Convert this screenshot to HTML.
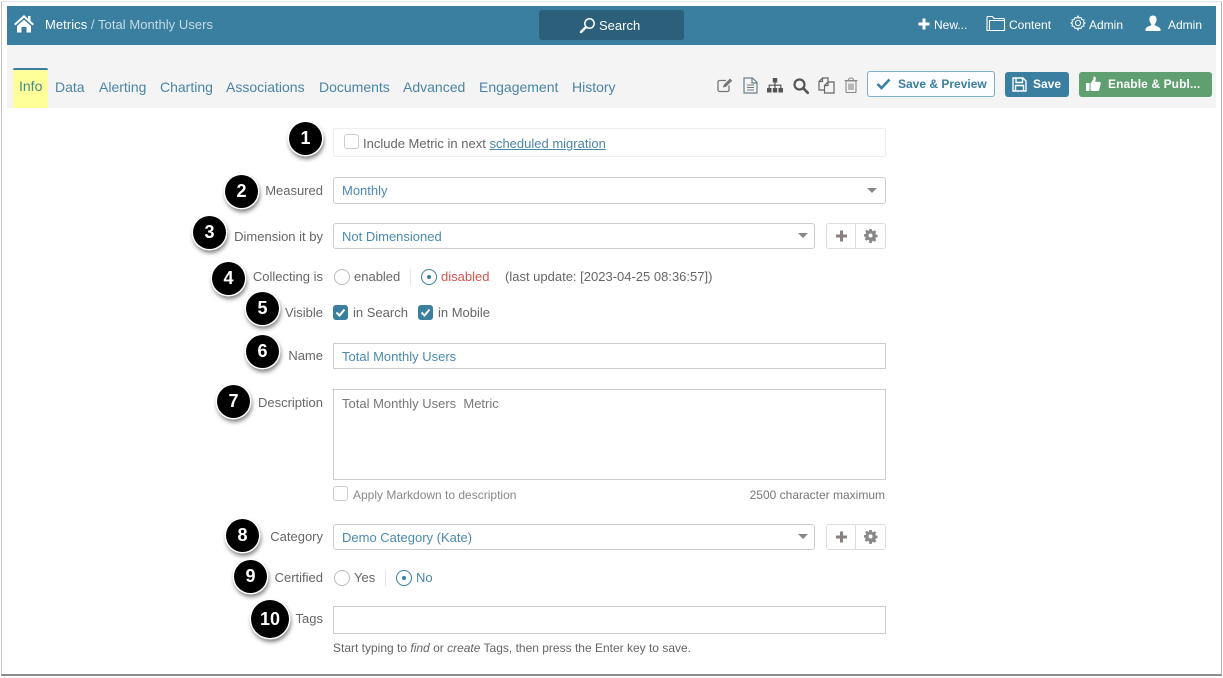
<!DOCTYPE html>
<html><head><meta charset="utf-8">
<style>
html,body{margin:0;padding:0;background:#fff}
body{width:1223px;height:678px;position:relative;overflow:hidden;font-family:"Liberation Sans",sans-serif;font-size:13px;color:#666}
.a{position:absolute;white-space:nowrap}
.t{position:absolute;white-space:nowrap;line-height:16px}
.l{position:absolute;white-space:nowrap;line-height:16px;right:900px;color:#666}
.tab{position:absolute;top:78px;line-height:18px;font-size:14px;color:#4b84a6;white-space:nowrap}
.box{position:absolute;box-sizing:border-box;background:#fff;border:1px solid #ccc;border-radius:3px}
.v{color:#4a8ab0}
.c{position:absolute;width:33px;height:33px;border-radius:50%;background:#000;box-shadow:0 0 0 1.5px #fff,1px 3px 4px 1px rgba(0,0,0,.5);color:#fff;font-size:18px;font-weight:bold;text-align:center;line-height:33px}
.arrow{position:absolute;width:0;height:0;border-left:5px solid transparent;border-right:5px solid transparent;border-top:5px solid #888}
.radio{position:absolute;box-sizing:border-box;width:16px;height:16px;border-radius:50%;border:1px solid #bbb;background:#fff}
.radio.on{border:1.5px solid #3a7fa0}
.radio.on:after{content:"";position:absolute;left:4.5px;top:4.5px;width:4px;height:4px;border-radius:50%;background:#3a7fa0}
.chk{position:absolute;width:15px;height:15px;border-radius:3px;background:#3a7fa0}
.un{position:absolute;box-sizing:border-box;width:15px;height:15px;border-radius:3px;border:1px solid #ccc;background:#fff}
svg{position:absolute;overflow:visible}
</style></head><body>
<div class="a" style="left:1px;top:1px;width:1221px;height:675px;box-sizing:border-box;border:1px solid #d4d4d4;border-bottom:2px solid #8c8c8c;border-right-color:#b5b5b5;border-left-color:#c4c4c4;border-top-color:#e6e6e6"></div>

<div class="a" style="left:7px;top:6px;width:1209px;height:39px;background:#3a7fa0"></div>
<div class="a" style="left:7px;top:45px;width:1209px;height:63px;background:#f4f4f4"></div>

<svg style="left:13px;top:14px" width="22" height="19" viewBox="0 0 22 19"><path d="M11 1 L1 10 L2.4 11.4 L11 3.8 L19.6 11.4 L21 10 L17.500 6.900 V2 H15 V4.700Z M4 12 L11 5.800 L18 12 V18.500 H13.500 V13 H8.500 V18.500 H4Z" fill="#fff"/></svg>
<div class="t" style="left:45px;top:17px;color:#fff;font-size:13px;letter-spacing:.05px">Metrics <span style="color:#c6dbe6">/ Total Monthly Users</span></div>

<div class="a" style="left:539px;top:10px;width:145px;height:30px;background:#2b5f7a;border-radius:3px"></div>
<svg style="left:579px;top:17px" width="17" height="17" viewBox="0 0 17 17"><circle cx="10.500" cy="6.500" r="4.700" fill="none" stroke="#fff" stroke-width="1.500"/><path d="M7 10 L2 15" stroke="#fff" stroke-width="2.400" stroke-linecap="round"/></svg>
<div class="t" style="left:599px;top:18px;color:#fff;font-size:13px">Search</div>

<svg style="left:918px;top:18px" width="12" height="12" viewBox="0 0 12 12"><path d="M4.500 0.500h3v4h4v3h-4v4h-3v-4h-4v-3h4z" fill="#fff"/></svg>
<div class="t" style="left:934px;top:17px;color:#fff;font-size:12px">New...</div>
<svg style="left:986px;top:15px" width="19" height="17" viewBox="0 0 19 17"><path d="M1 15.500V2.500a1 1 0 0 1 1-1h4.500l1.500 2h9.500a1 1 0 0 1 1 1v11zM3.500 15.500V5.500H18.500" fill="none" stroke="#fff" stroke-width="1.100"/></svg>
<div class="t" style="left:1009px;top:17px;color:#fff;font-size:12px">Content</div>
<svg style="left:1070px;top:15px" width="16" height="16" viewBox="0 0 16 16"><path d="M8 1l1 2 2-.5.800 2 2.200.500-.5 2L15 8l-1.500 1 .5 2-2.200.500-.8 2-2-.5-1 2-1-2-2 .5-.8-2L2 11l.5-2L1 8l1.500-1L2 5l2.200-.5.800-2 2 .5z" fill="none" stroke="#fff" stroke-width="1"/><circle cx="8" cy="8" r="2.600" fill="none" stroke="#fff" stroke-width="1"/></svg>
<div class="t" style="left:1089px;top:17px;color:#fff;font-size:12px">Admin</div>
<svg style="left:1145px;top:15px" width="16" height="17" viewBox="0 0 16 17"><path d="M8 .500c2.500 0 3.600 1.800 3.600 4 0 2-.9 3.600-1.800 4.500v1.400c2 .8 5.200 1.600 5.700 3.800V16H.500v-1.800c.5-2.200 3.700-3 5.700-3.800V9C5.300 8.100 4.400 6.500 4.400 4.500c0-2.200 1.100-4 3.600-4z" fill="#fff"/></svg>
<div class="t" style="left:1168px;top:17px;color:#fff;font-size:12px">Admin</div>

<div class="a" style="left:13px;top:68px;width:35px;height:40px;background:#ffff99;border-radius:2px 2px 0 0;box-sizing:border-box;border-top:2px solid #3a7fa0"></div>
<div class="tab" style="left:19px;top:77px;color:#4a8a8a">Info</div>
<div class="tab" style="left:55px">Data</div>
<div class="tab" style="left:99px">Alerting</div>
<div class="tab" style="left:160px">Charting</div>
<div class="tab" style="left:226px">Associations</div>
<div class="tab" style="left:319px">Documents</div>
<div class="tab" style="left:403px">Advanced</div>
<div class="tab" style="left:479px">Engagement</div>
<div class="tab" style="left:572px">History</div>

<svg style="left:717px;top:77px" width="17" height="16" viewBox="0 0 17 16"><path d="M12 8.500V13a1.500 1.500 0 0 1-1.500 1.500h-8A1.500 1.500 0 0 1 1 13V5a1.500 1.500 0 0 1 1.500-1.500H9" fill="none" stroke="#777" stroke-width="1.300"/><path d="M6 10.500l.7-2.800 6.300-6.200 2.200 2.200-6.300 6.200z" fill="#777"/></svg>
<svg style="left:743px;top:77px" width="15" height="17" viewBox="0 0 15 17"><path d="M1 1h8.500L14 5.500V16H1zM9 1v5h5" fill="none" stroke="#6a7f8f" stroke-width="1.200"/><path d="M4 8h7M4 10.500h7M4 13h7" stroke="#777" stroke-width="1.100"/></svg>
<svg style="left:767px;top:78px" width="16" height="15" viewBox="0 0 16 15"><path d="M5.800 0h4.400v4.500H5.800zM0 10h4.500v4.500H0zM5.800 10h4.400v4.500H5.800zM11.500 10H16v4.500h-4.500z" fill="#555"/><path d="M8 4.500V10M2.200 10V7.200h11.600V10" fill="none" stroke="#555" stroke-width="1.200"/></svg>
<svg style="left:793px;top:78px" width="16" height="16" viewBox="0 0 16 16"><circle cx="6.500" cy="6.500" r="5" fill="none" stroke="#555" stroke-width="2.200"/><path d="M10.200 10.200L14.800 14.800" stroke="#555" stroke-width="2.600" stroke-linecap="round"/></svg>
<svg style="left:818px;top:77px" width="17" height="17" viewBox="0 0 17 17"><path d="M6.500 13H1V4.500L4.500 1H10V5M4.500 1V4.500H1M6.500 16V8.500L10 5H16V16zM10 5V8.500H6.500" fill="none" stroke="#666" stroke-width="1.200"/></svg>
<svg style="left:844px;top:77px" width="14" height="16" viewBox="0 0 14 16"><path d="M2 4h10v10.500a1 1 0 0 1-1 1H3a1 1 0 0 1-1-1zM.5 3.500h13M4.500 3.500C4.500 1.800 5 1 7 1s2.500.8 2.500 2.500M5 6.500v6.500M7 6.500v6.500M9 6.500v6.500" fill="none" stroke="#888" stroke-width="1.100"/></svg>

<div class="a" style="left:867px;top:71px;width:128px;height:26px;box-sizing:border-box;border:1px solid #7fb0c8;border-radius:3px;background:#fbfdfe"></div>
<svg style="left:876px;top:78px" width="15" height="12" viewBox="0 0 15 12"><path d="M1.500 6l4 4 8-8.500" fill="none" stroke="#3a7fa0" stroke-width="2.600"/></svg>
<div class="t" style="left:898px;top:76px;color:#3a7fa0;font-size:12px;font-weight:bold;letter-spacing:0">Save &amp; Preview</div>
<div class="a" style="left:1005px;top:72px;width:64px;height:25px;background:#3a7fa0;border-radius:3px"></div>
<svg style="left:1012px;top:77px" width="15" height="15" viewBox="0 0 15 15"><path d="M1 1h10l3 3v10H1z M4 1v4.500h6.500V1 M3.500 14V8.500h8V14" fill="none" stroke="#fff" stroke-width="1.400"/></svg>
<div class="t" style="left:1033px;top:76px;color:#fff;font-size:12px;font-weight:bold">Save</div>
<div class="a" style="left:1079px;top:72px;width:133px;height:25px;background:#5f9f70;border-radius:3px"></div>
<svg style="left:1086px;top:76px" width="15" height="16" viewBox="0 0 15 16"><path d="M0 7h3.500v8H0zM4.500 7.500L7.500 3V.500c1.500-.3 2.300.8 2.300 2.200 0 1-.4 2-.8 3h4.300c1.300 0 1.700 1 1.400 2l-1.500 6c-.2.800-.8 1.300-1.600 1.300H6.500c-1 0-2-.5-2-1.500z" fill="#fff"/></svg>
<div class="t" style="left:1108px;top:76px;color:#fff;font-size:12px;font-weight:bold;letter-spacing:.1px">Enable &amp; Publ...</div>

<!-- Row 1 -->
<div class="box" style="left:333px;top:128px;width:553px;height:29px;border-color:#eee;border-radius:2px"></div>
<div class="un" style="left:344px;top:134px"></div>
<div class="t" style="left:363px;top:136px">Include Metric in next <span style="color:#4a86a8;text-decoration:underline">scheduled migration</span></div>

<div class="l" style="top:183px">Measured</div>
<div class="box" style="left:333px;top:177px;width:553px;height:27px"></div>
<div class="t v" style="left:342px;top:183px">Monthly</div>
<div class="arrow" style="left:867px;top:188px"></div>

<div class="l" style="top:229px">Dimension it by</div>
<div class="box" style="left:333px;top:223px;width:482px;height:26px"></div>
<div class="t v" style="left:342px;top:229px">Not Dimensioned</div>
<div class="arrow" style="left:798px;top:233px"></div>
<div class="box" style="left:826px;top:223px;width:60px;height:26px;border-color:#ddd"></div>
<div class="a" style="left:855px;top:224px;width:1px;height:24px;background:#ddd"></div>
<svg style="left:836px;top:230px" width="11" height="12" viewBox="0 0 11 12"><path d="M4 .500h3v4h4v3H7v4H4v-4H0v-3h4z" fill="#887f7f"/></svg>
<svg style="left:864px;top:229px" width="13" height="13" viewBox="0 0 13 13"><path d="M5.300 0h2.400l.3 1.700 1.200.5L10.600 1.200l1.700 1.700-1 1.400.5 1.200 1.700.3v2.400l-1.700.3-.5 1.200 1 1.400-1.700 1.700-1.400-1-1.200.5-.3 1.700H5.300L5 11.300l-1.200-.5-1.400 1-1.700-1.700 1-1.400-.5-1.200L0 7.700V5.300l1.700-.3.500-1.200-1-1.400 1.700-1.700 1.400 1L5 1.700z M6.500 4.500a2 2 0 1 0 0 4 2 2 0 0 0 0-4z" fill="#888" fill-rule="evenodd"/></svg>

<div class="l" style="top:269px">Collecting is</div>
<div class="radio" style="left:334px;top:269px"></div>
<div class="t" style="left:354px;top:269px">enabled</div>
<div class="a" style="left:410px;top:269px;width:1px;height:16px;background:#e5e5e5"></div>
<div class="radio on" style="left:421px;top:269px"></div>
<div class="t" style="left:441px;top:269px;color:#d9534f">disabled</div>
<div class="t" style="left:505px;top:269px">(last update: [2023-04-25 08:36:57])</div>

<div class="l" style="top:305px">Visible</div>
<div class="chk" style="left:333px;top:305px"></div>
<svg style="left:335px;top:308px" width="11" height="9" viewBox="0 0 11 9"><path d="M1.500 4.500l3 3 5-6" fill="none" stroke="#fff" stroke-width="2"/></svg>
<div class="t" style="left:353px;top:305px">in Search</div>
<div class="chk" style="left:418px;top:305px"></div>
<svg style="left:420px;top:308px" width="11" height="9" viewBox="0 0 11 9"><path d="M1.500 4.500l3 3 5-6" fill="none" stroke="#fff" stroke-width="2"/></svg>
<div class="t" style="left:438px;top:305px">in Mobile</div>

<div class="l" style="top:348px">Name</div>
<div class="box" style="left:333px;top:343px;width:553px;height:26px;border-radius:0"></div>
<div class="t v" style="left:342px;top:349px">Total Monthly Users</div>

<div class="l" style="top:395px">Description</div>
<div class="box" style="left:333px;top:389px;width:553px;height:91px;border-radius:0"></div>
<div class="t" style="left:342px;top:396px;color:#777;white-space:pre">Total Monthly Users  Metric</div>
<div class="un" style="left:333px;top:486px"></div>
<div class="t" style="left:353px;top:487px;font-size:12px;color:#888">Apply Markdown to description</div>
<div class="t" style="right:338px;top:487px;font-size:12px;color:#777">2500 character maximum</div>

<div class="l" style="top:529px">Category</div>
<div class="box" style="left:333px;top:524px;width:482px;height:26px"></div>
<div class="t v" style="left:342px;top:530px">Demo Category (Kate)</div>
<div class="arrow" style="left:798px;top:534px"></div>
<div class="box" style="left:826px;top:524px;width:60px;height:26px;border-color:#ddd"></div>
<div class="a" style="left:855px;top:525px;width:1px;height:24px;background:#ddd"></div>
<svg style="left:836px;top:531px" width="11" height="12" viewBox="0 0 11 12"><path d="M4 .500h3v4h4v3H7v4H4v-4H0v-3h4z" fill="#887f7f"/></svg>
<svg style="left:864px;top:530px" width="13" height="13" viewBox="0 0 13 13"><path d="M5.300 0h2.400l.3 1.700 1.200.5L10.600 1.200l1.700 1.700-1 1.400.5 1.200 1.700.3v2.400l-1.700.3-.5 1.200 1 1.400-1.700 1.700-1.400-1-1.200.5-.3 1.700H5.300L5 11.300l-1.200-.5-1.400 1-1.700-1.700 1-1.400-.5-1.200L0 7.700V5.300l1.700-.3.500-1.200-1-1.400 1.700-1.700 1.400 1L5 1.700z M6.500 4.500a2 2 0 1 0 0 4 2 2 0 0 0 0-4z" fill="#888" fill-rule="evenodd"/></svg>

<div class="l" style="top:570px">Certified</div>
<div class="radio" style="left:334px;top:570px"></div>
<div class="t" style="left:354px;top:570px">Yes</div>
<div class="a" style="left:385px;top:570px;width:1px;height:16px;background:#e5e5e5"></div>
<div class="radio on" style="left:396px;top:570px"></div>
<div class="t" style="left:416px;top:570px;color:#4a86a8">No</div>

<div class="l" style="top:611px">Tags</div>
<div class="box" style="left:333px;top:606px;width:553px;height:28px;border-radius:0"></div>
<div class="t" style="left:333px;top:640px;font-size:12px">Start typing to <i>find</i> or <i>create</i> Tags, then press the Enter key to save.</div>

<div class="c" style="left:289px;top:122px">1</div>
<div class="c" style="left:225px;top:175px">2</div>
<div class="c" style="left:193px;top:216px">3</div>
<div class="c" style="left:212px;top:262px">4</div>
<div class="c" style="left:246px;top:292px">5</div>
<div class="c" style="left:246px;top:335px">6</div>
<div class="c" style="left:217px;top:385px">7</div>
<div class="c" style="left:226px;top:519px">8</div>
<div class="c" style="left:234px;top:560px">9</div>
<div class="c" style="left:251px;top:600px;width:38px;height:38px;line-height:38px">10</div>
</body></html>
